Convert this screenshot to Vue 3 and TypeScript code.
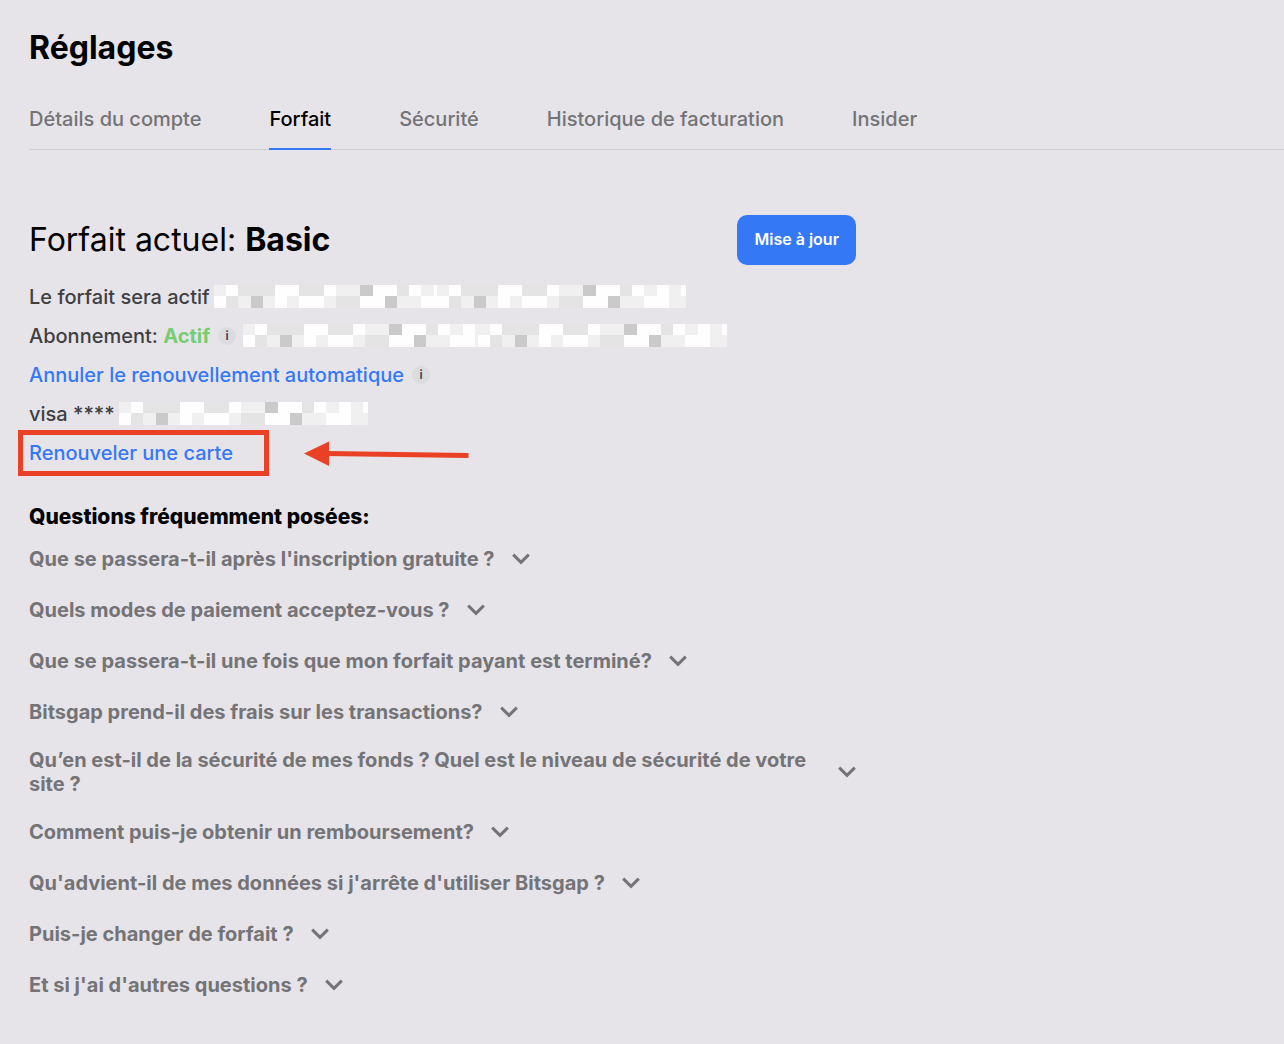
<script setup lang="ts">
import { ref } from 'vue'

interface Tab {
  id: string
  label: string
}

interface Tile {
  x: number
  y: number
  height: number
  fill: string
}

const tabs: Tab[] = [
  { id: 'compte', label: 'Détails du compte' },
  { id: 'forfait', label: 'Forfait' },
  { id: 'securite', label: 'Sécurité' },
  { id: 'facturation', label: 'Historique de facturation' },
  { id: 'insider', label: 'Insider' },
]
const activeTab = ref('forfait')

const questions: string[] = [
  "Que se passera-t-il après l'inscription gratuite ?",
  'Quels modes de paiement acceptez-vous ?',
  'Que se passera-t-il une fois que mon forfait payant est terminé?',
  'Bitsgap prend-il des frais sur les transactions?',
  'Qu’en est-il de la sécurité de mes fonds ? Quel est le niveau de sécurité de votre site ?',
  'Comment puis-je obtenir un remboursement?',
  "Qu'advient-il de mes données si j'arrête d'utiliser Bitsgap ?",
  'Puis-je changer de forfait ?',
  "Et si j'ai d'autres questions ?",
]

// Mosaic that hides private values: w white, l light, m medium, d dark.
const shades: Record<string, string> = { w: '#fefefe', l: '#f0f0f0', m: '#e4e4e4', d: '#cacaca' }
const mosaicRows = ['lwmmmwwmmwlldwwmwlwlw', 'wmldlwlwwlmmwwdllwwll']
const tiles: Tile[] = mosaicRows.flatMap((row, r) =>
  [...row].map((shade, c) => ({ x: c * 61, y: r * 56, height: r ? 59 : 56, fill: shades[shade] })),
)
const periodMask = [223, 249]
const renewalMask = [235, 249]
const cardMask = [249]
</script>

<template>
  <main class="settings">
    <h1 class="title">Réglages</h1>

    <nav class="tabs" aria-label="Réglages">
      <a
        v-for="tab in tabs"
        :key="tab.id"
        :href="`#${tab.id}`"
        class="tab"
        :class="{ active: tab.id === activeTab }"
        @click.prevent="activeTab = tab.id"
      >{{ tab.label }}</a>
    </nav>

    <div class="content">
      <header class="plan-header">
        <h2 class="plan-title">Forfait actuel: <strong>Basic</strong></h2>
        <button type="button" class="upgrade">Mise à jour</button>
      </header>

      <section class="details">
        <div class="row">
          <span>Le forfait sera actif</span>
          <span class="mask">
            <svg v-for="(w, i) in periodMask" :key="i" :width="w" height="23" :viewBox="`0 0 ${w * 5} 115`" shape-rendering="crispEdges">
              <rect v-for="(t, k) in tiles" :key="k" :x="t.x" :y="t.y" width="61" :height="t.height" :fill="t.fill" />
            </svg>
          </span>
        </div>
        <div class="row">
          <span>Abonnement: <b class="status">Actif</b></span>
          <button type="button" class="info">i</button>
          <span class="mask">
            <svg v-for="(w, i) in renewalMask" :key="i" :width="w" height="23" :viewBox="`0 0 ${w * 5} 115`" shape-rendering="crispEdges">
              <rect v-for="(t, k) in tiles" :key="k" :x="t.x" :y="t.y" width="61" :height="t.height" :fill="t.fill" />
            </svg>
          </span>
        </div>
        <div class="row">
          <a href="#annuler" class="link">Annuler le renouvellement automatique</a>
          <button type="button" class="info">i</button>
        </div>
        <div class="row">
          <span>visa ****</span>
          <span class="mask">
            <svg v-for="(w, i) in cardMask" :key="i" :width="w" height="23" :viewBox="`0 0 ${w * 5} 115`" shape-rendering="crispEdges">
              <rect v-for="(t, k) in tiles" :key="k" :x="t.x" :y="t.y" width="61" :height="t.height" :fill="t.fill" />
            </svg>
          </span>
        </div>
        <div class="row renew">
          <a href="#carte" class="link">Renouveler une carte</a>
          <span class="highlight" aria-hidden="true"></span>
          <svg class="arrow" width="165" height="26" viewBox="0 0 165 26" aria-hidden="true">
            <path d="M0 12.5 25 .5v24.500z" fill="#ea4025" />
            <path d="M22 12.500 164.500 14.500" stroke="#ea4025" stroke-width="5" />
          </svg>
        </div>
      </section>

      <section class="faq">
        <h3 class="faq-title">Questions fréquemment posées:</h3>
        <ul class="questions">
          <li v-for="question in questions" :key="question">
            <button type="button" class="question" aria-expanded="false">
              <span>{{ question }}</span>
              <svg class="chevron" width="18" height="12" viewBox="0 0 18 12" aria-hidden="true">
                <path d="M1.200 1.600 9 9.300 16.800 1.600" fill="none" stroke="currentColor" stroke-width="3" />
              </svg>
            </button>
          </li>
        </ul>
      </section>
    </div>
  </main>
</template>

<style>
body {
  margin: 0;
  background: #e6e4e9;
}
</style>

<style scoped>
.settings {
  box-sizing: border-box;
  min-height: 100vh;
  padding: 28px 0 40px 29px;
  background: #e6e4e9;
  color: #3f3f42;
  font-family: Inter, "Liberation Sans", sans-serif;
  font-size: 20px;
  line-height: 24px;
}

.title,
.plan-title,
.faq-title {
  margin: 0;
  color: #000;
}

.title {
  font-size: 32px;
  line-height: 40px;
  font-weight: 700;
}

.tabs {
  display: flex;
  gap: 68px;
  margin-top: 39px;
  border-bottom: 1px solid #cfced4;
}

.tab {
  margin-bottom: -1px;
  padding-bottom: 17px;
  border-bottom: 2px solid transparent;
  color: #747376;
  font-weight: 500;
  text-decoration: none;
  white-space: nowrap;
}

.tab.active {
  border-color: #3478f6;
  color: #000;
}

.content {
  max-width: 827px;
  margin-top: 65px;
}

.plan-header {
  display: flex;
  align-items: center;
  justify-content: space-between;
}

.plan-title {
  font-size: 32px;
  line-height: 40px;
  font-weight: 400;
}

.plan-title strong {
  font-weight: 700;
}

button {
  margin: 0;
  border: 0;
  font-family: inherit;
  cursor: pointer;
}

.upgrade {
  height: 50px;
  padding: 0 17px 2px;
  border-radius: 10px;
  background: #3478f6;
  color: #fff;
  font-size: 16px;
  font-weight: 600;
}

.details {
  margin-top: 12px;
  font-weight: 500;
}

.row {
  display: flex;
  align-items: center;
  height: 39px;
}

.mask {
  display: flex;
  margin-left: 4px;
}

.status {
  color: #76cd74;
  font-weight: 700;
}

.info {
  width: 18px;
  height: 18px;
  margin-left: 8px;
  padding: 0;
  border-radius: 9px;
  background: #dbdcdf;
  color: #3c4050;
  font-size: 12px;
  line-height: 18px;
  font-weight: 600;
}

.info + .mask {
  margin-left: 7px;
}

.link {
  color: #3478f6;
  text-decoration: none;
}

.renew {
  position: relative;
}

.highlight {
  position: absolute;
  top: -3px;
  left: -11px;
  box-sizing: border-box;
  width: 251px;
  height: 46px;
  border: 5px solid #ea4025;
  pointer-events: none;
}

.arrow {
  position: absolute;
  top: 8px;
  left: 275px;
}

.faq {
  margin-top: 31px;
}

.faq-title {
  font-size: 21px;
  line-height: 28px;
  font-weight: 800;
}

.questions {
  display: flex;
  flex-direction: column;
  gap: 21px;
  margin: 13px 0 0;
  padding: 0;
  list-style: none;
}

.question {
  display: flex;
  align-items: center;
  gap: 17px;
  min-height: 30px;
  padding: 0;
  background: none;
  color: #747376;
  font-size: 20px;
  line-height: 24px;
  font-weight: 700;
  text-align: left;
}

.chevron {
  flex: none;
}
</style>
